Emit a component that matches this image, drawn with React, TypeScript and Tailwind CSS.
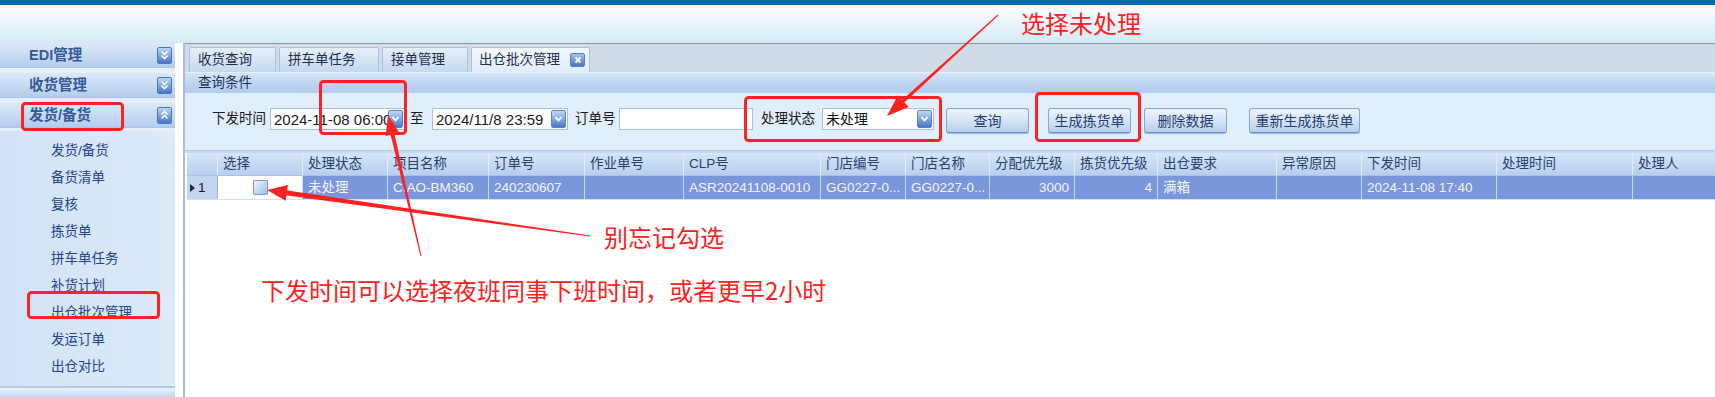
import React from "react";

type Pt = [number, number];

function fmt(pts: number[][]) {
  return pts.map((p) => p.map((n) => n.toFixed(1)).join(",")).join(" ");
}

function arrowPolys(tail: Pt, tip: Pt, wt: number, wh: number, hl: number, hw: number) {
  const dx = tip[0] - tail[0];
  const dy = tip[1] - tail[1];
  const len = Math.hypot(dx, dy);
  const ux = dx / len;
  const uy = dy / len;
  const px = -uy;
  const py = ux;
  const bx = tip[0] - ux * hl;
  const by = tip[1] - uy * hl;
  const shaft = fmt([
    [tail[0] + (px * wt) / 2, tail[1] + (py * wt) / 2],
    [bx + ux * 3 + (px * wh) / 2, by + uy * 3 + (py * wh) / 2],
    [bx + ux * 3 - (px * wh) / 2, by + uy * 3 - (py * wh) / 2],
    [tail[0] - (px * wt) / 2, tail[1] - (py * wt) / 2],
  ]);
  const head = fmt([
    [tip[0], tip[1]],
    [bx + px * hw, by + py * hw],
    [bx - px * hw, by - py * hw],
  ]);
  return { shaft, head };
}

function Arrow(props: { tail: Pt; tip: Pt; wt: number; wh: number; hl: number; hw: number }) {
  const { shaft, head } = arrowPolys(props.tail, props.tip, props.wt, props.wh, props.hl, props.hw);
  return (
    <g fill="#ff2020">
      <polygon points={shaft} />
      <polygon points={head} />
    </g>
  );
}

function ToggleBtn({ up }: { up?: boolean }) {
  return (
    <span className="w-[15px] h-[17px] rounded-[2px] border border-[#4a78c0] bg-gradient-to-b from-[#bcd6f4] to-[#4676c6] flex items-center justify-center">
      <svg width="9" height="10" viewBox="0 0 9 10">
        {up ? (
          <path d="M1.5 4.5 L4.5 1.5 L7.5 4.5 M1.5 8.5 L4.5 5.5 L7.5 8.5" stroke="#ffffff" strokeWidth="1.6" fill="none" />
        ) : (
          <path d="M1.5 1.5 L4.5 4.5 L7.5 1.5 M1.5 5.5 L4.5 8.5 L7.5 5.5" stroke="#ffffff" strokeWidth="1.6" fill="none" />
        )}
      </svg>
    </span>
  );
}

function DropBtn() {
  return (
    <span className="w-[15px] h-[18px] rounded-[2px] border border-[#5a84c6] bg-gradient-to-b from-[#c2d9f5] to-[#4777c8] flex items-center justify-center shrink-0">
      <svg width="9" height="6" viewBox="0 0 9 6">
        <path d="M1.5 1.2 L4.5 4.4 L7.5 1.2" stroke="#ffffff" strokeWidth="1.8" fill="none" />
      </svg>
    </span>
  );
}

function CloseBtn() {
  return (
    <span className="w-[15px] h-[14px] rounded-[2px] border border-[#5a80bf] bg-gradient-to-b from-[#a6c2ea] to-[#4a74ba] flex items-center justify-center shrink-0">
      <svg width="8" height="8" viewBox="0 0 8 8">
        <path d="M1.5 1.5 L6.5 6.5 M6.5 1.5 L1.5 6.5" stroke="#ffffff" strokeWidth="1.8" fill="none" />
      </svg>
    </span>
  );
}

function SideHeader({ label, up }: { label: string; up?: boolean }) {
  return (
    <div className="h-[25px] flex items-center justify-between pl-[29px] pr-[3px] bg-gradient-to-b from-[#dde9f8] via-[#c9dbf3] to-[#b3cdee] border-b border-[#a9c4e8]">
      <span className="text-[14.5px] font-bold text-[#36599a] leading-none">{label}</span>
      <ToggleBtn up={up} />
    </div>
  );
}

const sideItems = ["发货/备货", "备货清单", "复核", "拣货单", "拼车单任务", "补货计划", "出仓批次管理", "发运订单", "出仓对比"];

const tabs = [
  { label: "收货查询", w: "w-[87px]" },
  { label: "拼车单任务", w: "w-[100px]" },
  { label: "接单管理", w: "w-[86px]" },
];

type Col = { w: string; h: string; v: string; right?: boolean; white?: boolean };

const cols: Col[] = [
  { w: "w-[85px]", h: "选择", v: "", white: true },
  { w: "w-[85px]", h: "处理状态", v: "未处理" },
  { w: "w-[101px]", h: "项目名称", v: "CIAO-BM360" },
  { w: "w-[96px]", h: "订单号", v: "240230607" },
  { w: "w-[99px]", h: "作业单号", v: "" },
  { w: "w-[137px]", h: "CLP号", v: "ASR20241108-0010" },
  { w: "w-[85px]", h: "门店编号", v: "GG0227-0..." },
  { w: "w-[84px]", h: "门店名称", v: "GG0227-0..." },
  { w: "w-[85px]", h: "分配优先级", v: "3000", right: true },
  { w: "w-[83px]", h: "拣货优先级", v: "4", right: true },
  { w: "w-[119px]", h: "出仓要求", v: "满箱" },
  { w: "w-[85px]", h: "异常原因", v: "" },
  { w: "w-[135px]", h: "下发时间", v: "2024-11-08 17:40" },
  { w: "w-[136px]", h: "处理时间", v: "" },
  { w: "w-[120px]", h: "处理人", v: "" },
];

function Btn({ label, w, ml }: { label: string; w: string; ml: string }) {
  return (
    <div
      className={`${ml} ${w} h-[25px] shrink-0 rounded-[3px] border border-[#86a6d3] border-b-[#6d8fc4] bg-gradient-to-b from-[#eef4fc] via-[#d6e4f6] to-[#b7cff0] flex items-center justify-center text-[14px] text-[#233f6e] leading-none shadow-[0_1px_0_#9db7dd]`}
    >
      {label}
    </div>
  );
}

export default function App() {
  return (
    <div className="relative w-[1715px] h-[397px] overflow-hidden bg-white font-['Liberation_Sans','Noto_Sans_CJK_SC',sans-serif]">
      <div className="h-[5px] bg-[#0a68ad]" />
      <div className="h-[38px] bg-gradient-to-b from-[#fafdfe] via-[#eaf5fa] to-[#d2eaf5]" />
      <div className="flex h-[354px]">
        {/* Sidebar */}
        <aside className="w-[175px] shrink-0 flex flex-col bg-[#e6eff9]">
          <SideHeader label="EDI管理" />
          <div className="h-[5px]" />
          <SideHeader label="收货管理" />
          <div className="h-[5px]" />
          <SideHeader label="发货/备货" up />
          <div className="h-[3px]" />
          <div className="h-[255px] pt-[6px] bg-gradient-to-r from-[#d2e3f7] to-[#dceafa]">
            {sideItems.map((it) => (
              <div key={it} className="h-[27px] flex items-center pl-[51px] text-[13.5px] text-[#24438c] leading-none">
                {it}
              </div>
            ))}
          </div>
          <div className="h-[2px] bg-[#b3cbea]" />
          <div className="h-[3px]" />
          <div className="flex-1 bg-gradient-to-b from-[#dde9f8] to-[#c3d7f2]" />
        </aside>
        <div className="w-[8px] shrink-0 bg-white" />
        {/* Main */}
        <main className="flex-1 min-w-0 flex flex-col border-l-2 border-[#a7bfdf]">
          <div className="h-px bg-[#8c97a3]" />
          <div className="h-[28px] bg-[#d1dce9] flex items-end pl-[4px] gap-[3px]">
            {tabs.map((t) => (
              <div
                key={t.label}
                className={`${t.w} h-[25px] shrink-0 flex items-center pl-[8px] border border-b-0 border-[#a8c0df] rounded-t-[2px] bg-gradient-to-b from-[#e6eff9] to-[#c6d9f1] text-[13.5px] text-[#1f2f4a] leading-none`}
              >
                {t.label}
              </div>
            ))}
            <div className="w-[119px] h-[25px] shrink-0 flex items-center pl-[7px] border border-b-0 border-[#a8c0df] rounded-t-[2px] bg-gradient-to-b from-[#f1f7fd] to-[#e2edf9] text-[13.5px] text-[#1f2f4a] leading-none">
              <span className="w-[81px] whitespace-nowrap">出仓批次管理</span>
              <span className="ml-[10px]">
                <CloseBtn />
              </span>
            </div>
          </div>
          <div className="h-[21px] flex items-center pl-[13px] bg-gradient-to-b from-[#d5e6f8] via-[#bfd6f2] to-[#b2ccee] border-t border-[#e8f1fb] text-[13.5px] text-[#1c3151] leading-none">
            查询条件
          </div>
          {/* Form */}
          <div className="h-[57px] bg-[#e1eefb] flex items-start pt-[15px] text-[13.5px] text-[#1a1a1a] leading-none whitespace-nowrap">
            <div className="ml-[27px] w-[54px] h-[22px] flex items-center shrink-0">下发时间</div>
            <div className="ml-[4px] w-[135px] h-[22px] shrink-0 bg-white border border-[#a9c1de] flex items-center overflow-hidden">
              <span className="flex-1 overflow-hidden pl-[3px] text-[15px] text-[#1a1a1a]">2024-11-08 06:00</span>
              <span className="mr-[1px]">
                <DropBtn />
              </span>
            </div>
            <div className="ml-[5px] w-[14px] h-[22px] flex items-center shrink-0">至</div>
            <div className="ml-[8px] w-[136px] h-[22px] shrink-0 bg-white border border-[#a9c1de] flex items-center overflow-hidden">
              <span className="flex-1 overflow-hidden pl-[3px] text-[15px] text-[#1a1a1a]">2024/11/8 23:59</span>
              <span className="mr-[1px]">
                <DropBtn />
              </span>
            </div>
            <div className="ml-[7px] w-[41px] h-[22px] flex items-center shrink-0">订单号</div>
            <div className="ml-[3px] w-[134px] h-[22px] shrink-0 bg-white border border-[#a9c1de]" />
            <div className="ml-[8px] w-[54px] h-[22px] flex items-center shrink-0">处理状态</div>
            <div className="ml-[7px] w-[112px] h-[22px] shrink-0 bg-white border border-[#a9c1de] flex items-center overflow-hidden">
              <span className="flex-1 pl-[3px] text-[14px] text-[#111111]">未处理</span>
              <span className="mr-[1px]">
                <DropBtn />
              </span>
            </div>
            <Btn label="查询" w="w-[83px]" ml="ml-[12px]" />
            <Btn label="生成拣货单" w="w-[83px]" ml="ml-[19px]" />
            <Btn label="删除数据" w="w-[83px]" ml="ml-[13px]" />
            <Btn label="重新生成拣货单" w="w-[111px]" ml="ml-[22px]" />
          </div>
          <div className="h-[3px] bg-[#c6daf2] border-t border-[#b4cbea]" />
          {/* Grid */}
          <div className="ml-[2px] flex flex-col">
            <div className="h-[23px] flex bg-gradient-to-b from-[#d7e6f8] to-[#b7cff0] border-b border-[#a9c3e7] text-[13.5px] text-[#28416c] leading-none whitespace-nowrap">
              <div className="w-[31px] shrink-0 border-r border-[#e3edfa]" />
              {cols.map((c) => (
                <div key={c.h} className={`${c.w} shrink-0 border-r border-[#e3edfa] flex items-center pl-[5px]`}>
                  {c.h}
                </div>
              ))}
            </div>
            <div className="h-[24px] flex border-b border-[#d3e0f3] text-[13.5px] text-[#f3f6ff] leading-none whitespace-nowrap">
              <div className="w-[31px] shrink-0 border-r border-[#9fb7e0] bg-[#c3d5f1] flex items-center pl-[3px] text-[#1a1a1a]">
                <svg width="5" height="8" viewBox="0 0 5 8" className="mr-[3px]">
                  <path d="M0 0 L5 4 L0 8 Z" fill="#1c2a44" />
                </svg>
                <span>1</span>
              </div>
              {cols.map((c) =>
                c.white ? (
                  <div key={c.h} className={`${c.w} shrink-0 bg-white border-r border-[#d3e0f3] flex items-center justify-center`}>
                    <span className="ml-[1px] w-[15px] h-[15px] rounded-[1px] border border-[#7b9bd0] bg-gradient-to-br from-[#eef4fc] via-[#c9dbf4] to-[#9dbde9]" />
                  </div>
                ) : (
                  <div
                    key={c.h}
                    className={`${c.w} shrink-0 bg-[#7b97dc] border-r border-[#c3d4f0] flex items-center overflow-hidden ${c.right ? "justify-end pr-[5px]" : "pl-[5px]"}`}
                  >
                    {c.v}
                  </div>
                )
              )}
            </div>
          </div>
        </main>
      </div>

      {/* Annotation overlay */}
      <svg className="absolute left-0 top-0 pointer-events-none" width="1715" height="397" viewBox="0 0 1715 397">
        <g fill="none" stroke="#ff2222" strokeWidth="3">
          <rect x="22.5" y="103.5" width="100" height="26" rx="3" />
          <rect x="28.5" y="292.5" width="130" height="25" rx="3" />
          <rect x="320.5" y="81.5" width="85" height="52" rx="3" />
          <rect x="745.5" y="97.5" width="195" height="43" rx="3" />
          <rect x="1036.5" y="93.5" width="103" height="47" rx="3" />
        </g>
        <Arrow tail={[998, 15]} tip={[887, 116]} wt={1} wh={3.5} hl={22} hw={8} />
        <Arrow tail={[590, 236]} tip={[267, 190]} wt={1} wh={5} hl={20} hw={8} />
        <Arrow tail={[421, 256]} tip={[388, 115]} wt={1} wh={4} hl={20} hw={7} />
      </svg>
      <div className="absolute left-[1021px] top-[11px] text-[24px] leading-none text-[#ff2020] font-['Noto_Sans_CJK_SC',sans-serif] whitespace-nowrap">
        选择未处理
      </div>
      <div className="absolute left-[604px] top-[225px] text-[24px] leading-none text-[#ff2020] font-['Noto_Sans_CJK_SC',sans-serif] whitespace-nowrap">
        别忘记勾选
      </div>
      <div className="absolute left-[261px] top-[278px] text-[24px] leading-none text-[#ff2020] font-['Noto_Sans_CJK_SC',sans-serif] whitespace-nowrap">
        下发时间可以选择夜班同事下班时间，或者更早2小时
      </div>
    </div>
  );
}
